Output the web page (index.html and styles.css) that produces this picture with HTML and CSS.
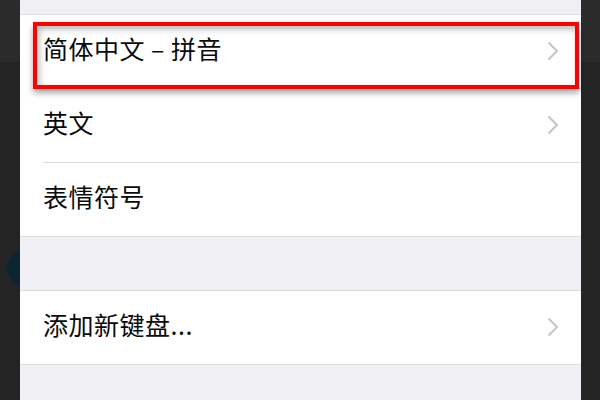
FILE: index.html
```html
<!DOCTYPE html>
<html lang="zh-CN">
<head>
    <meta charset="UTF-8">
    <meta name="viewport" content="width=device-width, initial-scale=1.0">
    <title>键盘</title>
    <link rel="stylesheet" href="styles.css">
</head>
<body>
    <div class="screen">
        <div class="avatar"></div>
        <div class="panel">
            <div class="gap top"></div>
            <div class="group">
                <div class="row">
                    <span class="label">简体中文 – 拼音</span>
                    <svg class="chevron" viewBox="0 0 12 20"><path d="M1.5 1.5 L10 10 L1.5 18.5" /></svg>
                </div>
                <div class="row">
                    <span class="label">英文</span>
                    <svg class="chevron" viewBox="0 0 12 20"><path d="M1.5 1.5 L10 10 L1.5 18.5" /></svg>
                </div>
                <div class="row">
                    <span class="label">表情符号</span>
                </div>
            </div>
            <div class="gap"></div>
            <div class="group">
                <div class="row">
                    <span class="label">添加新键盘...</span>
                    <svg class="chevron" viewBox="0 0 12 20"><path d="M1.5 1.5 L10 10 L1.5 18.5" /></svg>
                </div>
            </div>
            <div class="gap"></div>
            <div class="highlight"></div>
        </div>
    </div>
</body>
</html>
```

FILE: styles.css
```css
body {
    margin: 0;
    background: linear-gradient(#2b2b2b 0, #2b2b2b 62px, #242424 62px);
    font-family: "Noto Sans CJK SC", "Noto Sans", sans-serif;
}
.screen {
    position: relative;
    width: 600px;
    height: 400px;
    overflow: hidden;
    padding: 0 19px 0 20px;
    box-sizing: border-box;
}
.avatar {
    position: absolute;
    left: 7px;
    top: 249px;
    width: 38px;
    height: 38px;
    border-radius: 50%;
    background: #0b2632;
}
.panel {
    position: relative;
    height: 400px;
    background: #efeff4;
}
.gap {
    height: 53px;
}
.gap.top {
    height: 14px;
}
.group {
    background: #fff;
    border-top: 1px solid #dcdce0;
    border-bottom: 1px solid #dcdce0;
}
.row {
    display: flex;
    align-items: center;
    justify-content: space-between;
    height: 74px;
    margin-left: 23px;
    padding-right: 22px;
    border-bottom: 1px solid #dcdce0;
    box-sizing: border-box;
}
.row:last-child {
    border-bottom: none;
    height: 73px;
}
.label {
    font-size: 25px;
    line-height: 1;
    margin-bottom: 6px;
    color: #0a0a0a;
    letter-spacing: 0.5px;
}
.chevron {
    width: 12px;
    height: 20px;
    margin-bottom: 2px;
}
.chevron path {
    fill: none;
    stroke: #c7c7cc;
    stroke-width: 2.2;
}
.highlight {
    position: absolute;
    left: 13px;
    top: 22px;
    width: 546px;
    height: 67px;
    border: 4px solid #ff0000;
    box-sizing: border-box;
    box-shadow: 0 4px 6px rgba(0, 0, 0, 0.35), inset 2px 3px 6px rgba(0, 0, 0, 0.3);
}
```
